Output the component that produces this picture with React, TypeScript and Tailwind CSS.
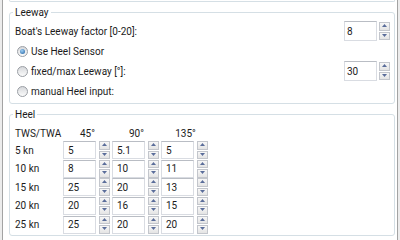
const HEEL_ROWS = [
  { tws: '5 kn', values: ['5', '5.1', '5'] },
  { tws: '10 kn', values: ['8', '10', '11'] },
  { tws: '15 kn', values: ['25', '20', '13'] },
  { tws: '20 kn', values: ['20', '16', '15'] },
  { tws: '25 kn', values: ['25', '20', '20'] },
]

const ANGLES = ['45°', '90°', '135°']

function Arrow({ up }: { up?: boolean }) {
  return (
    <svg width="5" height="3" viewBox="0 0 5 3">
      <polygon points={up ? '2.5,0 5,3 0,3' : '0,0 5,0 2.5,3'} fill="#5a6d9a" />
    </svg>
  )
}

function SpinButtons() {
  return (
    <div className="flex flex-col gap-[1px] w-[11px] h-[18px]">
      <div className="flex-1 flex items-start justify-center pt-[1px] border border-[#c3c6cc] bg-[linear-gradient(#f7f7f7,#e4e4e4)]">
        <Arrow up />
      </div>
      <div className="flex-1 flex items-start justify-center pt-[1px] border border-[#c3c6cc] bg-[linear-gradient(#f7f7f7,#e4e4e4)]">
        <Arrow />
      </div>
    </div>
  )
}

function SpinBox({ value }: { value: string }) {
  return (
    <div className="flex items-center gap-[2px]">
      <div className="w-[33px] h-[20px] flex items-center pl-[2px] border border-[#d9dce2] border-t-[#b9bdc4] bg-white">
        {value}
      </div>
      <SpinButtons />
    </div>
  )
}

function Radio({ checked, label }: { checked?: boolean; label: string }) {
  return (
    <div className="flex items-center h-[20px] pl-[2px] gap-[2px]">
      <span className="w-[11px] h-[11px] rounded-full border border-[#9a9ea4] bg-[linear-gradient(#d6d8db,#fbfbfb)] flex items-center justify-center">
        {checked && (
          <span className="w-[5px] h-[5px] rounded-full bg-[radial-gradient(circle_at_40%_35%,#9fd0f5,#1a5c9e)]" />
        )}
      </span>
      <span className="ml-[1px]">{label}</span>
    </div>
  )
}

function GroupBox({ title, className, children }: { title: string; className: string; children: React.ReactNode }) {
  return (
    <div className={`relative border border-[#d5dfe5] rounded-[3px] ${className}`}>
      <span className="absolute top-[-8px] left-[3px] px-[2px] bg-white leading-[15px]">{title}</span>
      {children}
    </div>
  )
}

export default function App() {
  return (
    <div className="w-[400px] h-[240px] bg-[#ececec] overflow-hidden font-['Roboto','Liberation_Sans',sans-serif] text-[10px] text-[#1b1b1b]">
      <div className="ml-[2px] w-[396px] h-[240px] bg-white border-x border-[#a3a3a3] pl-[6px] pr-[2px]">
        <div className="h-[2px] border-x border-b border-[#d5dfe5] rounded-b-[3px]" />

        <GroupBox title="Leeway" className="mt-[10px] pt-[8px] pb-[2px] pl-[5px] pr-[4px]">
          <div className="flex items-center justify-between h-[20px]">
            <span>Boat's Leeway factor [0-20]:</span>
            <SpinBox value="8" />
          </div>
          <Radio checked label="Use Heel Sensor" />
          <div className="flex items-center justify-between h-[20px]">
            <Radio label="fixed/max Leeway [°]:" />
            <SpinBox value="30" />
          </div>
          <Radio label="manual Heel input:" />
        </GroupBox>

        <GroupBox title="Heel" className="mt-[10px] h-[122px] pt-[11px] pl-[5px]">
          <div className="flex items-center h-[15px]">
            <span className="w-[48px]">TWS/TWA</span>
            {ANGLES.map((a) => (
              <span key={a} className="w-[49px] text-center">
                {a}
              </span>
            ))}
          </div>
          <div className="flex flex-col gap-[0.67px]">
            {HEEL_ROWS.map((row) => (
              <div key={row.tws} className="flex items-center h-[18px]">
                <span className="w-[48px]">{row.tws}</span>
                <div className="flex items-center gap-[2px]">
                  {row.values.map((v, i) => (
                    <div key={i} className="flex items-center gap-[3px]">
                      <div className="w-[33px] h-[18px] flex items-center pl-[4px] border border-[#d9dce2] border-t-[#b9bdc4] bg-white">
                        {v}
                      </div>
                      <SpinButtons />
                    </div>
                  ))}
                </div>
              </div>
            ))}
          </div>
        </GroupBox>
      </div>
    </div>
  )
}
